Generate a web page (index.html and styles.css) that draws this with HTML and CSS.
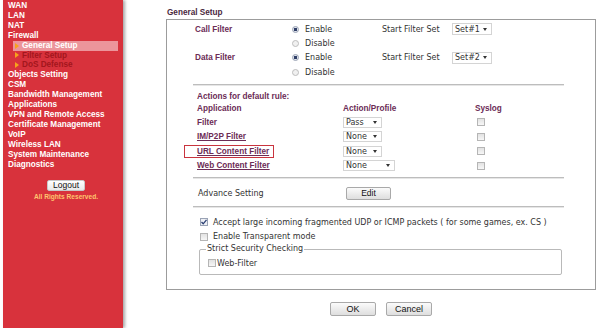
FILE: index.html
```
<!DOCTYPE html>
<html lang="en">
<head>
    <meta charset="UTF-8">
    <title>Firewall - General Setup</title>
    <link rel="stylesheet" href="styles.css">
</head>
<body>
    <div class="app">
        <aside class="sidebar">
            <ul class="menu">
                <li>WAN</li>
                <li>LAN</li>
                <li>NAT</li>
                <li>Firewall</li>
                <li class="sub active"><span class="arrow"></span>General Setup</li>
                <li class="sub"><span class="arrow"></span>Filter Setup</li>
                <li class="sub"><span class="arrow"></span>DoS Defense</li>
                <li>Objects Setting</li>
                <li>CSM</li>
                <li>Bandwidth Management</li>
                <li>Applications</li>
                <li>VPN and Remote Access</li>
                <li>Certificate Management</li>
                <li>VoIP</li>
                <li>Wireless LAN</li>
                <li>System Maintenance</li>
                <li>Diagnostics</li>
            </ul>
            <div class="logout-box">
                <button class="btn logout">Logout</button>
                <div class="rights">All Rights Reserved.</div>
            </div>
        </aside>

        <main class="main">
            <div class="title">General Setup</div>
            <div class="panel">
                <div class="filter-group">
                    <div class="label">Call Filter</div>
                    <div class="choice"><span class="radio on"></span>Enable</div>
                    <div class="text">Start Filter Set</div>
                    <div class="select set">Set#1<span class="caret"></span></div>
                    <div class="choice second"><span class="radio"></span>Disable</div>
                </div>
                <div class="filter-group">
                    <div class="label">Data Filter</div>
                    <div class="choice"><span class="radio on"></span>Enable</div>
                    <div class="text">Start Filter Set</div>
                    <div class="select set">Set#2<span class="caret"></span></div>
                    <div class="choice second"><span class="radio"></span>Disable</div>
                </div>

                <div class="sep first"></div>

                <div class="actions">
                    <div class="row head"><div class="label">Actions for default rule:</div></div>
                    <div class="row cols sub-head">
                        <div class="label">Application</div>
                        <div class="label">Action/Profile</div>
                        <div class="label">Syslog</div>
                    </div>
                    <div class="row cols">
                        <div class="label">Filter</div>
                        <div><span class="select act">Pass<span class="caret"></span></span></div>
                        <div><span class="check"></span></div>
                    </div>
                    <div class="row cols">
                        <div class="label"><a href="#">IM/P2P Filter</a></div>
                        <div><span class="select act">None<span class="caret"></span></span></div>
                        <div><span class="check"></span></div>
                    </div>
                    <div class="row cols">
                        <div class="label"><a href="#" class="marked">URL Content Filter</a></div>
                        <div><span class="select act">None<span class="caret"></span></span></div>
                        <div><span class="check"></span></div>
                    </div>
                    <div class="row cols">
                        <div class="label"><a href="#">Web Content Filter</a></div>
                        <div><span class="select act wide">None<span class="caret"></span></span></div>
                        <div><span class="check"></span></div>
                    </div>
                </div>

                <div class="sep"></div>

                <div class="advance">
                    <div class="text">Advance Setting</div>
                    <button class="btn edit">Edit</button>
                </div>

                <div class="sep last"></div>

                <div class="options">
                    <div class="option">
                        <span class="check on">
                            <svg width="8" height="8" viewBox="0 0 8 8"><path d="M1.5 4 L3.2 5.8 L6.5 1.8" fill="none" stroke="#2b3f73" stroke-width="1.3"/></svg>
                        </span>
                        Accept large incoming fragmented UDP or ICMP packets ( for some games, ex. CS )
                    </div>
                    <div class="option"><span class="check"></span>Enable Transparent mode</div>
                </div>

                <fieldset class="strict">
                    <legend>Strict Security Checking</legend>
                    <div class="option tight"><span class="check"></span>Web-Filter</div>
                </fieldset>
            </div>

            <div class="buttons">
                <button class="btn big">OK</button>
                <button class="btn big">Cancel</button>
            </div>
        </main>
    </div>
</body>
</html>
```

FILE: styles.css
```
body {
    margin: 0;
    padding: 0;
    background-color: #fff;
    font-family: 'DejaVu Sans', Verdana, sans-serif;
    font-size: 8px;
    color: #333;
}
.app {
    display: flex;
    height: 328px;
    overflow: hidden;
}

/* sidebar */
.sidebar {
    width: 120px;
    margin-left: 3px;
    background-color: #d8323c;
    box-shadow: 2px 0 3px rgba(0,0,0,0.35);
    flex-shrink: 0;
}
.menu {
    list-style: none;
    margin: 0;
    padding: 1px 0 0 0;
    font-family: 'Liberation Sans', Arial, sans-serif;
    font-weight: bold;
    font-size: 8.2px;
    line-height: 9.9px;
    color: #fff;
}
.menu li {
    padding-left: 5px;
    white-space: nowrap;
}
.menu li.sub {
    margin-left: 10px;
    width: 105px;
    padding-left: 2px;
    box-sizing: border-box;
    color: #a3161d;
    display: flex;
    align-items: center;
}
.menu li.sub.active {
    background-color: #ec959b;
    color: #fff;
}
.arrow {
    width: 0;
    height: 0;
    border-left: 4px solid #f7a21b;
    border-top: 3px solid transparent;
    border-bottom: 3px solid transparent;
    margin-right: 3px;
}
.logout-box {
    margin-top: 11px;
    padding-left: 6px;
    text-align: center;
}
.btn {
    font-family: 'Liberation Sans', Arial, sans-serif;
    color: #111;
    background: linear-gradient(#fbfbfb, #dedede);
    border: 1px solid #a9a9a9;
    border-radius: 2px;
    padding: 0;
    cursor: pointer;
}
.logout {
    width: 38px;
    height: 11px;
    font-size: 8.5px;
    line-height: 9px;
    border-color: #c8c8c8;
    background: linear-gradient(#fff, #e9e9e9);
}
.rights {
    margin-top: 2px;
    font-family: 'Liberation Sans', Arial, sans-serif;
    font-weight: bold;
    font-size: 6.6px;
    line-height: 8px;
    color: #ffc46e;
}

/* main */
.main {
    padding: 7px 0 0 43px;
}
.title {
    height: 12px;
    line-height: 12px;
    padding-left: 1px;
    font-family: 'Liberation Sans', Arial, sans-serif;
    font-weight: bold;
    font-size: 8.2px;
    color: #4a2840;
}
.panel {
    width: 430px;
    border: 1px solid #9c9c9c;
    padding: 2px 31px 14px 26px;
    box-sizing: border-box;
}
.label {
    font-family: 'Liberation Sans', Arial, sans-serif;
    font-weight: bold;
    font-size: 8.2px;
    color: #6c2c56;
    white-space: nowrap;
}
.label a {
    color: #6c2c56;
}
.filter-group {
    display: grid;
    grid-template-columns: 99px 90px 70px 42px;
    grid-template-rows: 14.4px 14.4px;
    align-items: center;
}
.filter-group .label {
    padding-left: 2px;
}
.choice {
    display: flex;
    align-items: center;
}
.choice.second {
    grid-column: 2;
}
.radio {
    width: 5px;
    height: 5px;
    border: 1px solid #bdbdbd;
    border-radius: 50%;
    background: #f0f0f0;
    margin-right: 6px;
}
.radio.on {
    border-color: #9aa3b5;
    background: radial-gradient(circle, #2e3d66 0, #2e3d66 1.4px, #dfe3ea 2px);
}
.select {
    display: inline-flex;
    align-items: center;
    justify-content: space-between;
    box-sizing: border-box;
    border: 1px solid #d4d4d4;
    background: #fff;
    color: #333;
    padding: 0 4px 0 2px;
}
.select.set {
    width: 40px;
    height: 12px;
}
.select.act {
    width: 39px;
    height: 11px;
}
.select.act.wide {
    width: 52px;
}
.caret {
    width: 0;
    height: 0;
    border-top: 3px solid #333;
    border-left: 2px solid transparent;
    border-right: 2px solid transparent;
}
.sep {
    border-top: 1px solid #bdbdbd;
    border-bottom: 1px solid #e6e6e6;
    margin: 4px 0 5px 0;
}
.sep.last {
    margin-bottom: 7px;
}
.actions .row {
    display: flex;
    align-items: center;
    height: 14.6px;
}
.actions .row.head {
    height: 12.6px;
}
.actions .row.sub-head {
    height: 11.6px;
}
.actions .cols {
    display: grid;
    grid-template-columns: 150px 132px auto;
}
.actions .cols > div:first-child {
    padding-left: 4px;
}
.actions .head .label {
    padding-left: 4px;
}
.actions .cols .check {
    margin-left: 2px;
}
.marked {
    display: inline-block;
    outline: 1px solid #c9343e;
    outline-offset: 0;
    padding: 1px 4px 1px 12px;
    margin-left: -12px;
}
.check {
    display: inline-block;
    width: 8px;
    height: 8px;
    box-sizing: border-box;
    border: 1px solid #b5b5b5;
    background: linear-gradient(#e2e2e2, #f7f7f7);
    vertical-align: middle;
    position: relative;
}
.check svg {
    position: absolute;
    left: -1px;
    top: -1px;
}
.check.on {
    border-color: #9aa3b5;
    background: #eef0f5;
}
.advance {
    display: grid;
    grid-template-columns: 153px auto;
    align-items: center;
    height: 20px;
    margin: -1px 0 -1px 0;
}
.advance .text {
    padding-left: 5px;
}
.edit {
    width: 45px;
    height: 13px;
    font-size: 8.5px;
}
.options {
    padding-left: 7px;
}
.option {
    display: flex;
    align-items: center;
    height: 14.5px;
    white-space: nowrap;
}
.option .check {
    margin-right: 5px;
}
.option.tight .check {
    margin-right: 1px;
}
.strict {
    margin: 0 2px 0 6px;
    padding: 2px 0 4px 6px;
    border: 1px solid #b9b9b9;
    border-radius: 2px;
}
.strict legend {
    padding: 0 1px;
    line-height: 10px;
}
.strict .option {
    height: 14px;
    padding-left: 2px;
}
.buttons {
    width: 430px;
    display: flex;
    justify-content: center;
    gap: 10px;
    margin-top: 12px;
}
.big {
    width: 46px;
    height: 14px;
    font-size: 9px;
}
```
